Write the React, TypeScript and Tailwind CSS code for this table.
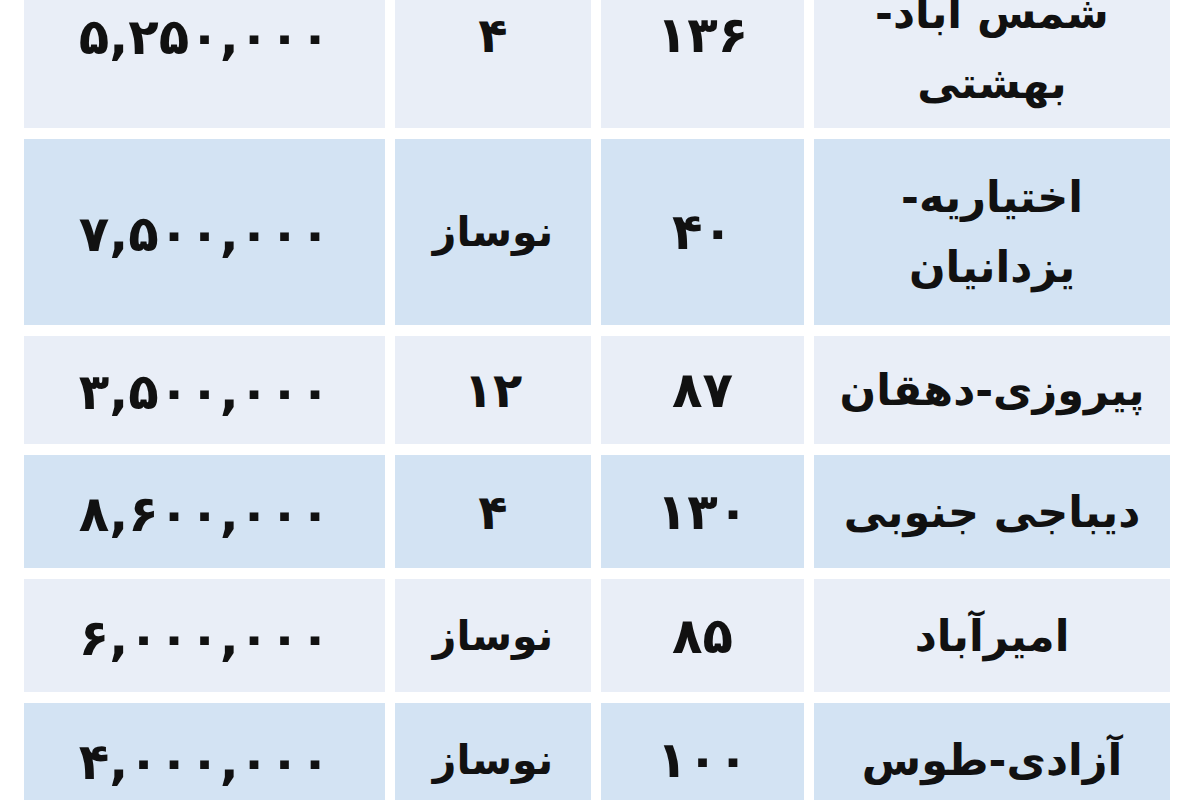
type Row = {
  name: string[];
  area: string;
  age: string;
  price: string;
  dark: boolean;
  h: string;
  pad?: string;
};

const rows: Row[] = [
  { name: ['شمس آباد-', 'بهشتی'], area: '۱۳۶', age: '۴', price: '۵,۲۵۰,۰۰۰', dark: false, h: 'h-[187px]', pad: 'pt-[26px]' },
  { name: ['اختیاریه-', 'یزدانیان'], area: '۴۰', age: 'نوساز', price: '۷,۵۰۰,۰۰۰', dark: true, h: 'h-[186px]' },
  { name: ['پیروزی-دهقان'], area: '۸۷', age: '۱۲', price: '۳,۵۰۰,۰۰۰', dark: false, h: 'h-[108px]' },
  { name: ['دیباجی جنوبی'], area: '۱۳۰', age: '۴', price: '۸,۶۰۰,۰۰۰', dark: true, h: 'h-[113px]' },
  { name: ['امیرآباد'], area: '۸۵', age: 'نوساز', price: '۶,۰۰۰,۰۰۰', dark: false, h: 'h-[113px]' },
  { name: ['آزادی-طوس'], area: '۱۰۰', age: 'نوساز', price: '۴,۰۰۰,۰۰۰', dark: true, h: 'h-[114px]' },
];

function Cell({ dark, h, className = '', children }: { dark: boolean; h: string; className?: string; children: React.ReactNode }) {
  return (
    <div
      dir="rtl"
      className={`${h} ${className} flex flex-col items-center justify-center text-center leading-[70px] ${
        dark ? 'bg-[#d3e3f3]' : 'bg-[#e9eef7]'
      }`}
    >
      {children}
    </div>
  );
}

export default function App() {
  return (
    <div
      className="w-[1200px] h-[800px] overflow-hidden bg-white text-[#111] font-bold text-[43px]"
      style={{ fontFamily: '"DejaVu Sans", sans-serif' }}
    >
      <div className="-mt-[59px] ml-[24px] grid grid-cols-[361px_196px_203px_356px] gap-x-[10px] gap-y-[11px]">
        {rows.map((r, i) => (
          <div key={i} className="contents">
            <Cell dark={r.dark} h={r.h}>
              <span className="text-[50px] tracking-[11px] pt-[4px]">{r.price}</span>
            </Cell>
            <Cell dark={r.dark} h={r.h}>
              <span className={r.age === 'نوساز' ? 'text-[41px]' : 'text-[48px]'}>{r.age}</span>
            </Cell>
            <Cell dark={r.dark} h={r.h}>
              <span className="text-[50px] tracking-[7px]">{r.area}</span>
            </Cell>
            <Cell dark={r.dark} h={r.h} className={r.pad ?? ''}>
              {r.name.map((line) => (
                <span key={line}>{line}</span>
              ))}
            </Cell>
          </div>
        ))}
      </div>
    </div>
  );
}
